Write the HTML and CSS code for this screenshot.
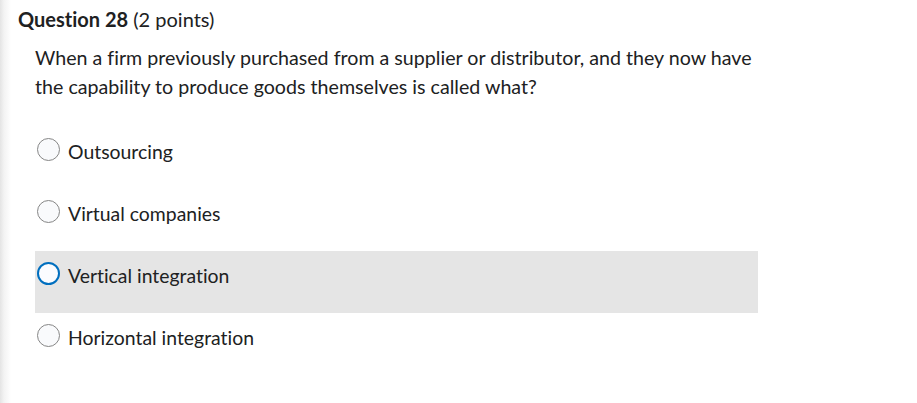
FILE: index.html
```html
<!DOCTYPE html>
<html lang="en">
<head>
<meta charset="utf-8">
<title>Question 28</title>
<link rel="stylesheet" href="styles.css">
</head>
<body>
<div class="page">
  <h2 class="title"><strong>Question 28</strong> (2 points)</h2>
  <div class="content">
    <p class="question">When a firm previously purchased from a supplier or distributor, and they now have the capability to produce goods themselves is called what?</p>
    <div class="options">
      <label class="option"><span class="radio"></span><span class="label">Outsourcing</span></label>
      <label class="option"><span class="radio"></span><span class="label">Virtual companies</span></label>
      <label class="option is-focused"><span class="radio"></span><span class="label">Vertical integration</span></label>
      <label class="option"><span class="radio"></span><span class="label">Horizontal integration</span></label>
    </div>
  </div>
</div>
</body>
</html>
```

FILE: styles.css
```css
html, body {
  margin: 0;
  padding: 0;
}
body {
  width: 917px;
  height: 403px;
  overflow: hidden;
  background: linear-gradient(to right, #e4e4e4 0, #f3f3f3 4px, #ffffff 11px);
  font-family: Lato, "Noto Sans", sans-serif;
  font-variant-ligatures: none;
  color: #202122;
}
.page {
  padding: 7px 0 0 18px;
}
.title {
  margin: 0;
  font-size: 20px;
  line-height: 24px;
  font-weight: 400;
}
.title strong {
  font-weight: 700;
}
.content {
  padding-left: 17px;
}
.question {
  margin: 12px 0 0 0;
  width: 730px;
  font-size: 19.65px;
  line-height: 29px;
}
.options {
  margin-top: 26px;
  width: 723px;
  display: flex;
  flex-direction: column;
}
.option {
  display: flex;
  align-items: flex-start;
  gap: 8px;
  height: 62px;
  box-sizing: border-box;
  padding: 10px 0 0 2px;
  font-size: 19.4px;
  line-height: 29px;
}
.option.is-focused {
  background: #e5e5e5;
}
.radio {
  width: 23px;
  height: 23px;
  margin-top: 1px;
  box-sizing: border-box;
  border: 1px solid #868686;
  border-radius: 50%;
  background: #f9fafc;
  flex: none;
}
.is-focused .radio {
  border: 2px solid #006fbf;
  background: #fbfcff;
}
```
